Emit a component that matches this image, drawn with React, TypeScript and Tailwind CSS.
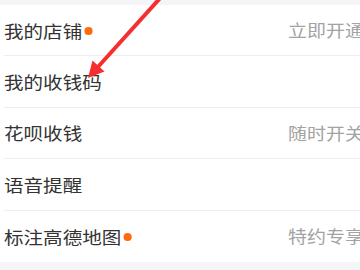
import React from "react";

const rows: { label: string; dot?: boolean; right?: string }[] = [
  { label: "我的店铺", dot: true, right: "立即开通" },
  { label: "我的收钱码" },
  { label: "花呗收钱", right: "随时开关" },
  { label: "语音提醒" },
  { label: "标注高德地图", dot: true, right: "特约专享" },
];

export default function App() {
  return (
    <div
      className="relative w-[360px] h-[270px] overflow-hidden bg-[#f5f5f7]"
      style={{ fontFamily: '"Noto Sans CJK SC", "Noto Sans", sans-serif' }}
    >
      <div className="h-[5px]" />
      <div className="w-[376px] bg-white">
        {rows.map((r, i) => (
          <div key={i} className="pl-[4px] h-[51.4px]">
            <div
              className={
                "h-full flex items-center pr-[12px] " +
                (i < rows.length - 1 ? "border-b border-[#efeff1]" : "")
              }
            >
              <div className="flex-1 flex items-center">
                <span className="inline-flex items-center origin-left scale-x-[1.15] text-[17px] text-[#333333] leading-none">
                  {r.label}
                  {r.dot && (
                    <span className="ml-[2px] mt-[2px] w-[7px] h-[8px] rounded-full bg-[#ff6a10]" />
                  )}
                </span>
              </div>
              {r.right && (
                <div className="w-[76px] shrink-0">
                  <span className="inline-block whitespace-nowrap origin-left scale-x-[1.15] text-[16.5px] text-[#a3a3a3] leading-none">
                    {r.right}
                  </span>
                </div>
              )}
            </div>
          </div>
        ))}
      </div>
      <svg
        className="absolute left-0 top-0"
        width="360"
        height="270"
        viewBox="0 0 360 270"
      >
        <line x1="162" y1="-4" x2="97" y2="68" stroke="#f52f2f" strokeWidth="4" strokeLinecap="round" />
        <polygon points="88,78 92.5,60.5 104.5,71.5" fill="#f52f2f" />
      </svg>
    </div>
  );
}
